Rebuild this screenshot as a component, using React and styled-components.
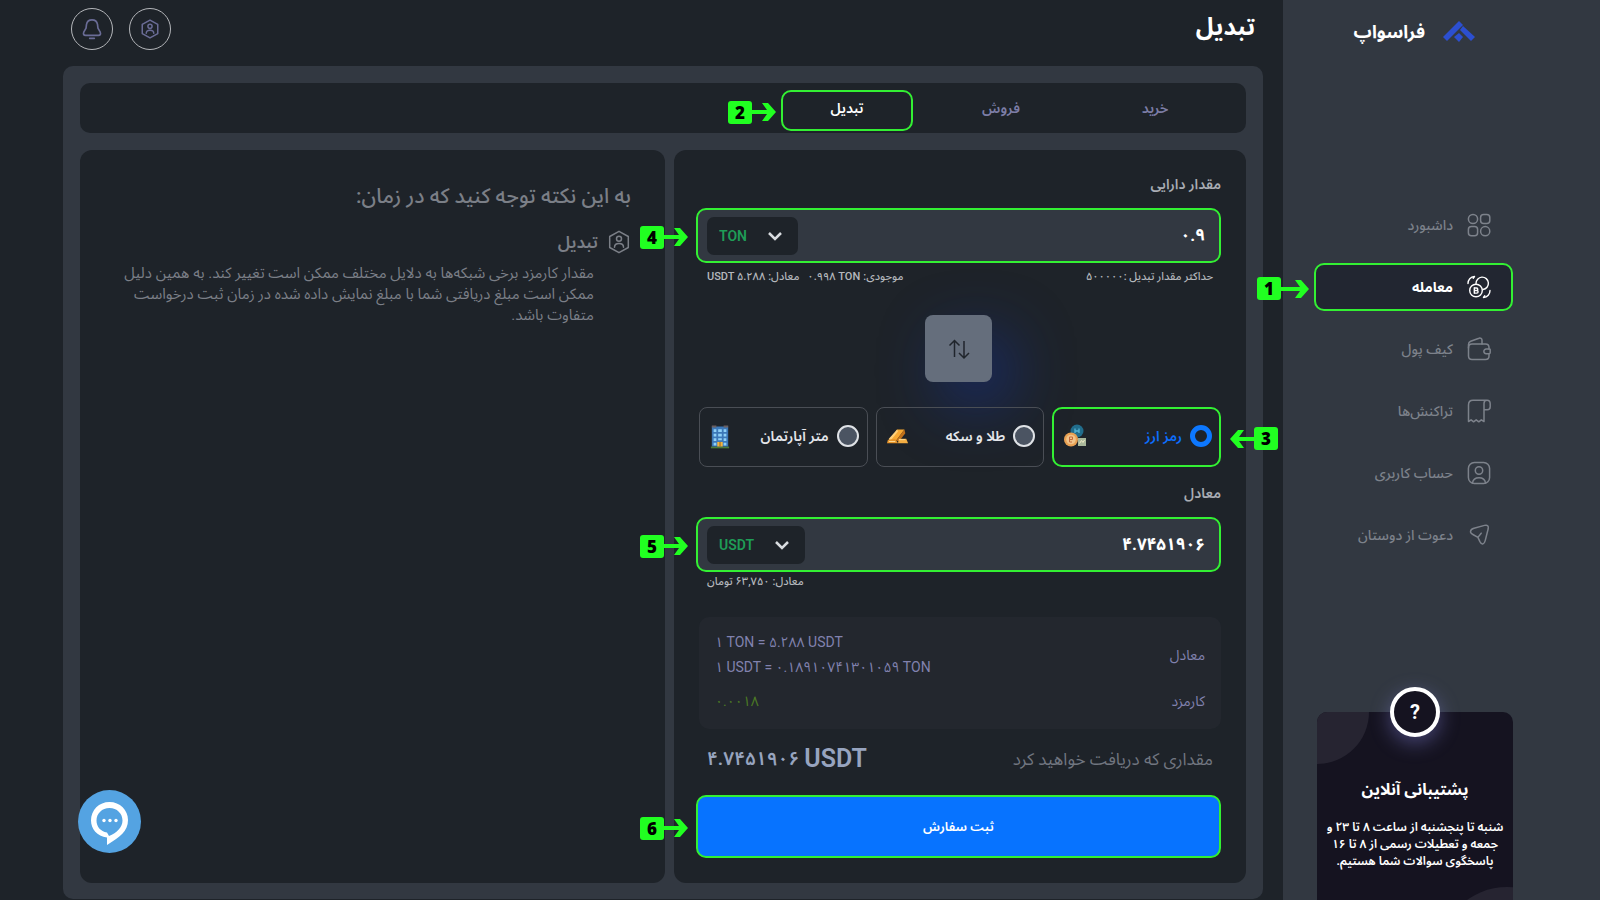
import { useState } from 'react'
import styled, { createGlobalStyle, css } from 'styled-components'

const GlobalStyle = createGlobalStyle`
  * {
    box-sizing: border-box;
  }

  body {
    margin: 0;
    background: #1e2329;
    color: #fff;
    font-family: Roboto, 'Noto Sans Arabic', 'Vazirmatn', 'DejaVu Sans', sans-serif;
    font-size: 14px;
  }

  button,
  input,
  select {
    font: inherit;
    color: inherit;
  }
`

const Page = styled.div`
  display: flex;
  min-height: 100vh;
`

const Sidebar = styled.aside`
  flex: 0 0 317px;
  display: flex;
  flex-direction: column;
  padding: 0 87px 0 31px;
  background: #323841;
`

const Brand = styled.a`
  display: flex;
  align-items: center;
  gap: 17px;
  height: 64px;
  padding-right: 37px;
  color: #fff;
  font-size: 18px;
  font-weight: 700;
  text-decoration: none;
`

const Nav = styled.nav`
  display: flex;
  flex-direction: column;
  gap: 14px;
  margin: 137px 0 60px;
`

const NavItem = styled.a`
  position: relative;
  display: flex;
  align-items: center;
  gap: 14px;
  height: 48px;
  padding: 0 20px;
  border: 2px solid transparent;
  border-radius: 10px;
  color: #7d828b;
  font-weight: 500;
  text-decoration: none;

  ${p =>
    p.$active &&
    css`
      background: #222631;
      border-color: #33f033;
      color: #fff;
      font-weight: 700;
    `}
`

const Support = styled.section`
  position: relative;
  flex: none;
  height: 188px;
  margin: auto 0 0 3px;
  padding-top: 62px;
  border-radius: 10px 10px 0 0;
  background: #151320;
  text-align: center;
`

const SupportShapes = styled.svg`
  position: absolute;
  inset: 0;
  width: 100%;
  height: 100%;
  border-radius: 10px 10px 0 0;
`

const SupportMark = styled.span`
  position: absolute;
  top: -25px;
  left: calc(50% - 25px);
  display: grid;
  place-items: center;
  width: 50px;
  height: 50px;
  border: 4px solid #fff;
  border-radius: 50%;
  background: #151320;
  box-shadow: 0 6px 20px rgba(130, 130, 220, 0.45);
  font-size: 20px;
  font-weight: 700;
`

const SupportTitle = styled.h2`
  position: relative;
  margin: 0 0 13px;
  font-size: 16px;
  line-height: 32px;
`

const SupportText = styled.p`
  position: relative;
  margin: 0;
  font-size: 12px;
  font-weight: 600;
  line-height: 17px;
`

const Main = styled.main`
  flex: 1;
  display: flex;
  flex-direction: column;
  min-width: 0;
  padding: 0 20px 1px 63px;
`

const Header = styled.header`
  display: flex;
  align-items: center;
  gap: 16px;
  height: 66px;
  padding: 0 8px 8px;
`

const PageTitle = styled.h1`
  flex: 1;
  margin: 0;
  padding-bottom: 4px;
  font-size: 24px;
  font-weight: 700;
  line-height: 26px;
`

const RoundButton = styled.button`
  display: grid;
  place-items: center;
  width: 42px;
  height: 42px;
  padding: 0;
  border: 1px solid #b4b6ba;
  border-radius: 50%;
  background: none;
  color: #6a6c96;
`

const Board = styled.div`
  flex: 1;
  display: flex;
  flex-direction: column;
  gap: 17px;
  padding: 17px 17px 16px;
  border-radius: 10px;
  background: #323841;
`

const Tabs = styled.div`
  display: flex;
  align-items: center;
  height: 50px;
  padding: 5px 14px 0;
  border-radius: 10px;
  background: #1e2329;
`

const Tab = styled.button`
  position: relative;
  width: 132px;
  height: 41px;
  margin: 0 11px;
  padding: 0 0 5px;
  border: 2px solid ${p => (p.$active ? '#33f033' : 'transparent')};
  border-radius: 10px;
  background: none;
  color: ${p => (p.$active ? '#fff' : '#7c7da6')};
  font-weight: 600;
`

const Columns = styled.div`
  flex: 1;
  display: grid;
  grid-template-columns: 572fr 585fr;
  gap: 9px;
`

const Card = styled.section`
  min-width: 0;
  border-radius: 12px;
  background: #1e2329;
`

const Form = styled(Card)`
  display: flex;
  flex-direction: column;
  padding: 22px 25px 25px 22px;
`

const Label = styled.label`
  color: #a9adb4;
  font-weight: 600;
  line-height: 24px;
`

const AmountBox = styled.div`
  position: relative;
  display: flex;
  align-items: center;
  height: 55px;
  margin-top: 12px;
  padding: 0 14px 0 9px;
  border: 2px solid #33f033;
  border-radius: 10px;
  background: #323841;
`

const AmountInput = styled.input`
  flex: 1;
  min-width: 0;
  padding: 0;
  border: 0;
  outline: 0;
  background: none;
  font-size: 17px;
  font-weight: 700;
`

const SelectWrap = styled.div`
  display: grid;
  align-items: center;
  direction: ltr;
  width: ${p => p.$width}px;
  height: 38px;

  & > * {
    grid-area: 1 / 1;
  }

  & > svg {
    justify-self: end;
    margin-right: 16px;
    pointer-events: none;
  }
`

const CoinSelect = styled.select`
  width: 100%;
  height: 100%;
  padding: 0 12px;
  border: 0;
  border-radius: 7px;
  appearance: none;
  background: #1e2329;
  color: #1f9d57;
  font-weight: 600;
`

const Hints = styled.div`
  display: flex;
  gap: 8px;
  margin-top: ${p => p.$gap || 0}px;
  padding: 0 8px 0 11px;
  color: #b5b8bd;
  font-size: 11px;
  font-weight: 500;
  line-height: 20px;
`

const Hint = styled.span`
  display: flex;
  gap: 3px;
  ${p => p.$push && 'margin-left: auto;'}
`

const SwapButton = styled.button`
  display: grid;
  place-items: center;
  align-self: center;
  width: 67px;
  height: 67px;
  margin: 28px 0 25px;
  padding: 0;
  border: 0;
  border-radius: 8px;
  background: #656e7c;
  box-shadow: 18px 22px 60px 4px rgba(20, 50, 160, 0.45);
  color: #20252c;
`

const Assets = styled.div`
  display: grid;
  grid-template-columns: repeat(3, 1fr);
  gap: 8px;
  margin: 0 0 14px 3px;
`

const AssetOption = styled.label`
  position: relative;
  display: flex;
  align-items: center;
  gap: 8px;
  height: 60px;
  padding: 0 8px 2px 10px;
  border: 1px solid #4a4e55;
  border-radius: 8px;
  color: #e4e6ea;
  font-weight: 600;
  white-space: nowrap;

  & > svg {
    margin-right: auto;
  }

  ${p =>
    p.$active &&
    css`
      padding: 0 7px 2px 9px;
      border: 2px solid #33f033;
      border-radius: 10px;
      color: #0d6efd;
    `}
`

const Radio = styled.input`
  flex: none;
  width: 22px;
  height: 22px;
  margin: 0;
  appearance: none;
  border: 2px solid #dfe2e6;
  border-radius: 50%;
  background: #4b5462;

  &:checked {
    border: 5px solid #0d78ff;
    background: #1e2329;
  }
`

const Summary = styled.dl`
  display: flex;
  flex-direction: column;
  gap: 9px;
  margin: 25px 0 14px 3px;
  padding: 13px 16px 15px;
  border-radius: 10px;
  background: #23272e;
  color: #8182ae;
`

const SummaryRow = styled.div`
  display: flex;
  align-items: center;
  justify-content: space-between;
  line-height: 25px;

  dd {
    margin: 0;
    direction: ltr;
    color: ${p => p.$color || 'inherit'};
  }
`

const Receive = styled.div`
  display: flex;
  align-items: center;
  justify-content: space-between;
  padding: 0 8px 0 11px;
  color: #717680;
  font-size: 17px;
  line-height: 32px;
`

const ReceiveAmount = styled.output`
  display: flex;
  align-items: center;
  gap: 5px;
  direction: ltr;
  color: #97a4bf;
  font-size: 19px;
  font-weight: 600;

  b {
    font-size: 25px;
    font-weight: 600;
  }
`

const Submit = styled.button`
  position: relative;
  height: 63px;
  margin-top: 20px;
  border: 2px solid #33f033;
  border-radius: 10px;
  background: #0773ff;
  color: #fff;
  font-size: 13px;
  font-weight: 600;
`

const Notes = styled(Card)`
  padding: 30px 34px 30px 34px;
  color: #7b7f87;
`

const NotesTitle = styled.h2`
  margin: 0 0 14px;
  font-size: 21px;
  font-weight: 500;
  line-height: 32px;
`

const NoteHead = styled.h3`
  display: flex;
  align-items: center;
  gap: 9px;
  margin: 0;
  font-size: 17px;
  font-weight: 600;
  line-height: 32px;
`

const NoteText = styled.p`
  margin: 5px 37px 0 0;
  font-size: 15px;
  line-height: 21px;
`

const ChatButton = styled.button`
  position: fixed;
  left: 78px;
  bottom: 47px;
  width: 63px;
  height: 63px;
  padding: 0;
  border: 0;
  border-radius: 50%;
  background: #54a3e2;
`

const Step = styled.span`
  position: absolute;
  top: calc(50% - 10px);
  ${p => (p.$side === 'right' ? 'left' : 'right')}: calc(100% + ${p => p.$gap}px);
  display: flex;
  align-items: center;
  flex-direction: ${p => (p.$side === 'right' ? 'row' : 'row-reverse')};
  direction: ltr;
  height: 23px;
  color: #21ff21;

  svg {
    ${p => p.$side === 'right' && 'transform: scaleX(-1);'}
  }

  b {
    display: grid;
    place-items: center;
    width: 24px;
    height: 23px;
    border-radius: 3px;
    background: #21ff21;
    color: #000;
    font-family: 'Open Sans', 'Noto Sans', sans-serif;
    font-size: 17px;
    font-weight: 800;
    line-height: 23px;
  }
`

const StepMark = ({ n, side = 'left', gap, arrow = 24 }) => (
  <Step $side={side} $gap={gap}>
    <svg width={arrow} height="18" viewBox={`0 0 ${arrow} 18`} fill="currentColor" aria-hidden="true">
      <path d={`M0 7h${arrow - 9}l-5-7h6l8 9-8 9h-6l5-7H0z`} />
    </svg>
    <b>{n}</b>
  </Step>
)

const Icon = ({ children, size = 24, width = 1.5 }) => (
  <svg
    width={size}
    height={size}
    viewBox="0 0 24 24"
    fill="none"
    stroke="currentColor"
    strokeWidth={width}
    strokeLinecap="round"
    strokeLinejoin="round"
    aria-hidden="true"
  >
    {children}
  </svg>
)

const LogoMark = () => (
  <svg width="34" height="24" viewBox="0 0 34 24" fill="#2c4fd0" aria-hidden="true">
    <path d="M17 1l4 4L5 21l-4-4z" />
    <path d="M21 6l12 11-4 4-11-11z" />
    <path d="M17 13l4 4-4 5-5-5z" />
  </svg>
)

const DashboardIcon = () => (
  <Icon>
    <circle cx="6" cy="6" r="4.6" />
    <rect x="13.6" y="1.4" width="9.2" height="9.2" rx="3" />
    <rect x="1.4" y="13.6" width="9.2" height="9.2" rx="3" />
    <circle cx="18.2" cy="18.2" r="4.6" />
  </Icon>
)

const TradeIcon = () => (
  <Icon width={1.4}>
    <path d="M9 8.5A6.2 6.2 0 1 1 16 14.5" />
    <circle cx="9" cy="15.5" r="6.3" />
    <path d="M7.3 12.8v5.4M7.3 13h2.2a1.2 1.2 0 0 1 0 2.5H7.3h2.5a1.3 1.3 0 0 1 0 2.6H7.3" />
    <path d="M1 8.5C1 5 3.500 1.800 7.500 1.500L6.200 3.300M23 15.500c0 3.500-2.500 6.700-6.500 7l1.300-1.800" />
  </Icon>
)

const WalletIcon = () => (
  <Icon>
    <path d="M22 12V10.500C22 8.500 20.500 7 18.500 7H5C3 7 1.500 8.500 1.500 10.500V19c0 2 1.500 3.500 3.500 3.500h13.500c2 0 3.500-1.500 3.500-3.500v-2" />
    <path d="M1.500 11V7.500c0-1.500.8-2.700 2.200-3.200L12 1.200c1.500-.6 3 .4 3 2V7" />
    <path d="M23.200 12.600v2.800c0 .8-.6 1.300-1.300 1.300h-2.700a2.300 2.300 0 0 1 0-4.700H22c.7 0 1.200.2 1.200.6z" />
  </Icon>
)

const ReceiptIcon = () => (
  <Icon>
    <path d="M20 1.300H6C3 1.300 1.500 3 1.500 6v16.500l2.600-1.700 2.500 2 2.600-2 2.600 2 2.500-2 2.700 1.700V4.500c0-1.800 1-3.200 3-3.200s3.200 1.500 3.200 3.500v3c0 2-1.200 3-3 3H17" />
  </Icon>
)

const AccountIcon = () => (
  <Icon>
    <rect x="1.400" y="1.400" width="21.200" height="21.200" rx="6" />
    <circle cx="12" cy="9.500" r="3.700" />
    <path d="M5.500 22c.5-3.500 3-5.300 6.500-5.300s6 1.800 6.500 5.300" />
  </Icon>
)

const SendIcon = () => (
  <Icon>
    <path d="M7 5.200l10.500-2.800c3-.8 4.300.6 3.700 3.400l-3 11.800c-1 4-3.500 4.500-5.300 1l-2-4.200-5-2.900C2.200 9.600 3 6.300 7 5.200zM10.900 14.400l3.300-4.200" />
  </Icon>
)

const HexUserIcon = ({ size, width }) => (
  <Icon size={size} width={width}>
    <path d="M12 1.300l9.300 5.200v11L12 22.700l-9.300-5.200v-11z" />
    <circle cx="12" cy="8.800" r="2.500" />
    <path d="M7.500 17.200c0-2.500 2-3.700 4.500-3.700s4.500 1.200 4.500 3.700" />
  </Icon>
)

const BellIcon = () => (
  <Icon size={22} width={1.8}>
    <path d="M12 2C8 2 6.500 4 6 7l-.5 4L3 15.500C2.200 17.500 3 19 5 19h14c2 0 2.800-1.500 2-3.500L18.500 11 18 7c-.5-3-2-5-6-5z" />
    <path d="M9.500 22.300h5" />
  </Icon>
)

const SwapIcon = () => (
  <svg width="22" height="22" viewBox="0 0 22 22" fill="none" stroke="currentColor" strokeWidth="1.500" aria-hidden="true">
    <path d="M6.500 19V2.500M1.500 7.500l5-5 5 5M16 3v16.500M11 15l5 5 5-5" />
  </svg>
)

const Chevron = () => (
  <svg width="14" height="10" viewBox="0 0 14 10" fill="none" stroke="#d9dce0" strokeWidth="2.500" aria-hidden="true">
    <path d="M1 2l6 6 6-6" />
  </svg>
)

const CoinsIcon = () => (
  <svg width="24" height="24" viewBox="0 0 24 24" aria-hidden="true">
    <circle cx="14" cy="7" r="6.500" fill="#216d8c" />
    <path d="M12 4.500v4.500M16 4.500v4.500M12 7h4" stroke="#55b5d5" strokeWidth="1.300" />
    <circle cx="8" cy="15.500" r="7" fill="#e8a052" />
    <circle cx="8" cy="15.500" r="4.800" fill="#f1c489" />
    <path d="M6.500 13v5h2.500M6.500 13h3v2.500h-3" stroke="#c4683b" fill="none" />
    <rect x="15" y="14" width="8" height="8" fill="#a9b79a" />
    <path d="M16.500 19.500l2-3 1.500 2 1.500-2.500" stroke="#efe9c5" fill="none" />
  </svg>
)

const GoldIcon = () => (
  <svg width="22" height="24" viewBox="0 0 24 24" aria-hidden="true">
    <path d="M11 5h8l-9 12H3z" fill="#f7a833" />
    <path d="M11 5L2 15l1 3 9-11z" fill="#ffd07a" />
    <path d="M19 5l1 4-7 9-3-1z" fill="#c0701a" />
    <path d="M1 16l8-1 3 5H0z" fill="#e8952a" />
    <path d="M13 15h8l2 5H12z" fill="#f3ad42" />
    <path d="M13 16h7M2 18h7" stroke="#ffdf9c" />
  </svg>
)

const BuildingIcon = () => (
  <svg width="20" height="25" viewBox="0 0 22 26" aria-hidden="true">
    <path d="M1 24h20v2H1z" fill="#4b7c36" />
    <path d="M2 2h18v22H2z" fill="#3c78b8" />
    <path d="M2 1h5v2H2zM15 1h5v2h-5z" fill="#6a5f60" />
    <path
      d="M4 5h3v3H4zM9 5h4v3H9zM15 5h3v3h-3zM4 10h3v3H4zM9 10h4v3H9zM15 10h3v3h-3zM4 15h3v3H4zM15 15h3v3h-3zM9 15h4v2H9zM4 20h3v3H4zM15 20h3v3h-3z"
      fill="#8ed0f7"
    />
    <path d="M8 19h6v5H8z" fill="#f0b541" />
    <path d="M11 19v5" stroke="#8a5a1c" />
  </svg>
)

const ChatIcon = () => (
  <svg width="63" height="63" viewBox="0 0 63 63" aria-hidden="true">
    <path
      fill="#fff"
      fillRule="evenodd"
      d="M31.500 12C42 12 50 20 50 30c0 11-8 17-21 25v-7.500C19 46 13 39 13 30.500 13 20 21 12 31.500 12zm0 6C24 18 18.500 23.500 18.500 30.500c0 6 4 11 10.500 12l2 3.500c8-3 13.500-9 13.500-15.500C44.500 23.500 39 18 31.500 18z"
    />
    <g fill="#fff">
      <circle cx="26" cy="30.500" r="1.700" />
      <circle cx="32" cy="30.500" r="1.700" />
      <circle cx="38" cy="30.500" r="1.700" />
    </g>
  </svg>
)

const navItems = [
  { label: 'داشبورد', icon: DashboardIcon },
  { label: 'معامله', icon: TradeIcon, active: true },
  { label: 'کیف پول', icon: WalletIcon },
  { label: 'تراکنش‌ها', icon: ReceiptIcon },
  { label: 'حساب کاربری', icon: AccountIcon },
  { label: 'دعوت از دوستان', icon: SendIcon }
]

const tabs = ['خرید', 'فروش', 'تبدیل']

const assets = [
  { id: 'crypto', label: 'رمز ارز', icon: CoinsIcon },
  { id: 'gold', label: 'طلا و سکه', icon: GoldIcon },
  { id: 'meter', label: 'متر آپارتمان', icon: BuildingIcon }
]

const Amount = ({ id, coin, width, value, onChange, step }) => (
  <AmountBox>
    <AmountInput id={id} value={value} onChange={e => onChange(e.target.value)} />
    <SelectWrap $width={width}>
      <CoinSelect aria-label="ارز" defaultValue={coin}>
        <option>TON</option>
        <option>USDT</option>
      </CoinSelect>
      <Chevron />
    </SelectWrap>
    <StepMark n={step} gap={10} />
  </AmountBox>
)

export default () => {
  const [amount, setAmount] = useState('۰.۹')
  const [result, setResult] = useState('۴.۷۴۵۱۹۰۶')
  const [tab, setTab] = useState('تبدیل')
  const [asset, setAsset] = useState('crypto')

  return (
    <Page dir="rtl" lang="fa">
      <GlobalStyle />
      <Sidebar>
        <Brand href="#">
          <LogoMark />
          فراسواپ
        </Brand>
        <Nav>
          {navItems.map(({ label, icon: ItemIcon, active }) => (
            <NavItem key={label} href="#" $active={active}>
              <ItemIcon />
              {label}
              {active && <StepMark n={1} gap={7} arrow={28} />}
            </NavItem>
          ))}
        </Nav>
        <Support>
          <SupportShapes fill="#262431">
            <circle cx="0" cy="0" r="52" />
            <circle cx="190" cy="243" r="68" />
          </SupportShapes>
          <SupportMark>?</SupportMark>
          <SupportTitle>پشتیبانی آنلاین</SupportTitle>
          <SupportText>
            شنبه تا پنجشنبه از ساعت ۸ تا ۲۳ و<br />
            جمعه و تعطیلات رسمی از ۸ تا ۱۶
            <br />
            پاسخگوی سوالات شما هستیم.
          </SupportText>
        </Support>
      </Sidebar>

      <Main>
        <Header>
          <PageTitle>تبدیل</PageTitle>
          <RoundButton aria-label="حساب کاربری">
            <HexUserIcon size={20} width={1.8} />
          </RoundButton>
          <RoundButton aria-label="اعلان‌ها">
            <BellIcon />
          </RoundButton>
        </Header>

        <Board>
          <Tabs>
            {tabs.map(name => (
              <Tab key={name} $active={name === tab} onClick={() => setTab(name)}>
                {name}
                {name === 'تبدیل' && <StepMark n={2} gap={7} />}
              </Tab>
            ))}
          </Tabs>

          <Columns>
            <Form>
              <Label htmlFor="amount">مقدار دارایی</Label>
              <Amount id="amount" coin="TON" width={91} value={amount} onChange={setAmount} step={4} />
              <Hints $gap={4}>
                <Hint $push>حداکثر مقدار تبدیل :۵۰۰۰۰۰</Hint>
                <Hint>
                  <span>موجودی:</span>
                  <span dir="ltr">۰.۹۹۸ TON</span>
                </Hint>
                <Hint>
                  <span>معادل:</span>
                  <span dir="ltr">USDT ۵.۲۸۸</span>
                </Hint>
              </Hints>

              <SwapButton aria-label="جابجایی">
                <SwapIcon />
              </SwapButton>

              <Assets>
                {assets.map(({ id, label, icon: AssetIcon }) => (
                  <AssetOption key={id} $active={id === asset}>
                    <Radio type="radio" name="asset" checked={id === asset} onChange={() => setAsset(id)} />
                    {label}
                    <AssetIcon />
                    {id === 'crypto' && <StepMark n={3} side="right" gap={11} />}
                  </AssetOption>
                ))}
              </Assets>

              <Label htmlFor="result">معادل</Label>
              <Amount id="result" coin="USDT" width={98} value={result} onChange={setResult} step={5} />
              <Hints>
                <Hint $push />
                <Hint>
                  <span>معادل:</span>
                  <span>۶۳,۷۵۰ تومان</span>
                </Hint>
              </Hints>

              <Summary>
                <SummaryRow>
                  <dt>معادل</dt>
                  <dd>
                    ۱ TON = ۵.۲۸۸ USDT
                    <br />۱ USDT = ۰.۱۸۹۱۰۷۴۱۳۰۱۰۵۹ TON
                  </dd>
                </SummaryRow>
                <SummaryRow $color="#4c7a24">
                  <dt>کارمزد</dt>
                  <dd>۰.۰۰۱۸</dd>
                </SummaryRow>
              </Summary>

              <Receive>
                <span>مقداری که دریافت خواهید کرد</span>
                <ReceiveAmount>
                  ۴.۷۴۵۱۹۰۶ <b>USDT</b>
                </ReceiveAmount>
              </Receive>

              <Submit>
                ثبت سفارش
                <StepMark n={6} gap={10} />
              </Submit>
            </Form>

            <Notes>
              <NotesTitle>به این نکته توجه کنید که در زمان:</NotesTitle>
              <NoteHead>
                <HexUserIcon size={24} width={1.5} />
                تبدیل
              </NoteHead>
              <NoteText>
                مقدار کارمزد برخی شبکه‌ها به دلایل مختلف ممکن است تغییر کند. به همین دلیل ممکن است مبلغ
                دریافتی شما با مبلغ نمایش داده شده در زمان ثبت درخواست متفاوت باشد.
              </NoteText>
            </Notes>
          </Columns>
        </Board>
      </Main>

      <ChatButton aria-label="گفتگو">
        <ChatIcon />
      </ChatButton>
    </Page>
  )
}
